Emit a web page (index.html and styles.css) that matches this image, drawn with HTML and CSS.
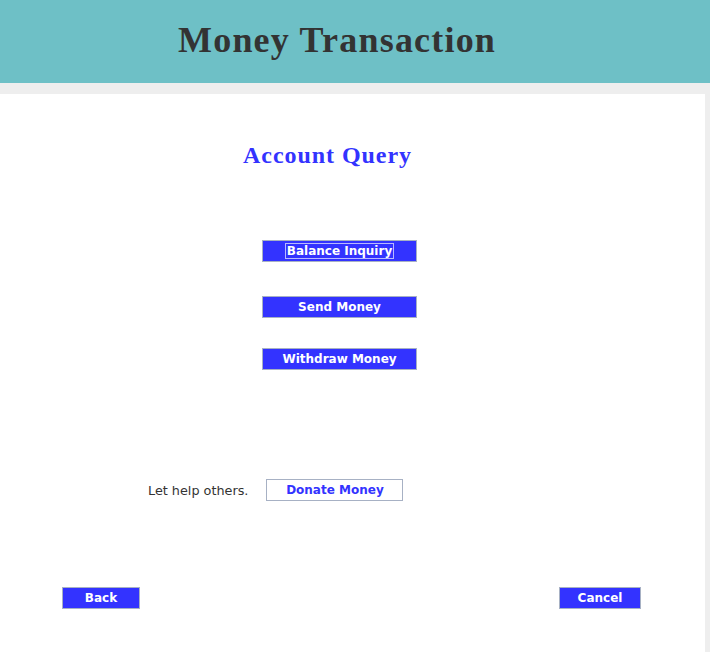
FILE: index.html
```html
<!DOCTYPE html>
<html>
<head>
<meta charset="utf-8">
<link rel="stylesheet" href="styles.css">
</head>
<body>
<header class="topbar">
  <h1 class="title">Money Transaction</h1>
</header>
<main class="panel">
  <h2 class="subtitle">Account Query</h2>
  <div class="actions">
    <button class="btn btn-primary btn-wide"><span class="focus">Balance Inquiry</span></button>
    <button class="btn btn-primary btn-wide">Send Money</button>
    <button class="btn btn-primary btn-wide">Withdraw Money</button>
  </div>
  <div class="donate-row">
    <span class="donate-label">Let help others.</span>
    <button class="btn btn-outline">Donate Money</button>
  </div>
  <div class="footer-row">
    <button class="btn btn-primary btn-back">Back</button>
    <button class="btn btn-primary btn-cancel">Cancel</button>
  </div>
</main>
</body>
</html>
```
FILE: styles.css
```css
html, body {
  margin: 0;
  padding: 0;
}
body {
  background: #eeeeee;
  width: 710px;
  height: 652px;
  overflow: hidden;
}
.topbar {
  height: 83px;
  background: #6ec0c6;
  box-sizing: border-box;
  padding-top: 20px;
}
.title {
  margin: 0 0 0 178px;
  font-family: "Liberation Serif", serif;
  font-weight: bold;
  font-size: 36px;
  line-height: 40px;
  letter-spacing: 1.2px;
  color: #333333;
}
.panel {
  margin-top: 11px;
  width: 705px;
  height: 558px;
  background: #ffffff;
  box-sizing: border-box;
  padding-top: 47px;
  display: flex;
  flex-direction: column;
}
.subtitle {
  margin: 0 0 0 243px;
  font-family: "Liberation Serif", serif;
  font-weight: bold;
  font-size: 24px;
  line-height: 28px;
  letter-spacing: 0.95px;
  color: #3333ff;
}
.btn {
  font-family: "DejaVu Sans", sans-serif;
  font-weight: bold;
  font-size: 12px;
  height: 22px;
  box-sizing: border-box;
  border: 1px solid #a7b1c4;
  padding: 0;
  margin: 0;
  display: flex;
  align-items: center;
  justify-content: center;
}
.btn-primary {
  background: #3333ff;
  color: #ffffff;
}
.btn-outline {
  background: #ffffff;
  color: #3333ff;
  width: 137px;
}
.actions {
  margin: 71px 0 0 262px;
  display: flex;
  flex-direction: column;
}
.btn-wide {
  width: 155px;
}
.actions .btn:nth-child(2) {
  margin-top: 34px;
}
.actions .btn:nth-child(3) {
  margin-top: 30px;
}
.focus {
  border: 1px solid #b8b8ff;
  padding: 0 1px;
  line-height: 14px;
}
.donate-row {
  margin: 109px 0 0 148px;
  display: flex;
  align-items: center;
  gap: 18px;
}
.donate-label {
  font-family: "DejaVu Sans", sans-serif;
  font-size: 12.8px;
  color: #333333;
}
.footer-row {
  margin: 86px 0 0 62px;
  width: 579px;
  display: flex;
  justify-content: space-between;
}
.btn-back {
  width: 78px;
}
.btn-cancel {
  width: 82px;
}
```
